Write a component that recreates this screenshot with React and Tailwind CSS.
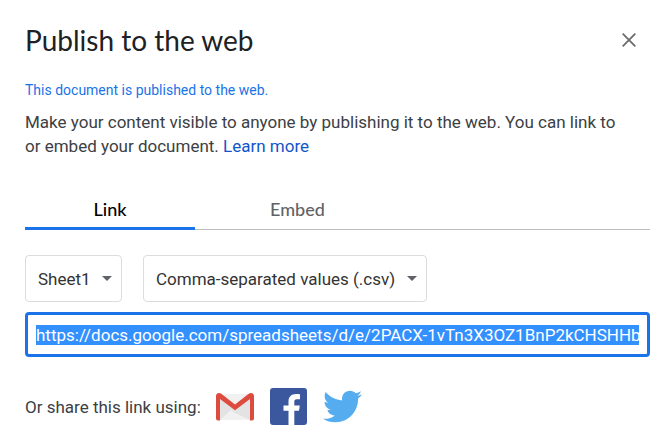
import { useEffect, useRef } from "react";
import { FaTwitter } from "react-icons/fa";

const PUBLISHED_URL =
  "https://docs.google.com/spreadsheets/d/e/2PACX-1vTn3X3OZ1BnP2kCHSHHb7/pub?gid=0&single=true&output=csv";

function Dropdown({ label, value }) {
  return (
    <div className="relative">
      <select
        aria-label={label}
        defaultValue={value}
        className="block h-[47px] appearance-none rounded border border-[#dadce0] bg-white pr-[30px] pl-3 text-[#333333]"
      >
        <option>{value}</option>
      </select>
      <svg
        viewBox="0 0 10 5"
        className="pointer-events-none absolute top-[21px] right-[10px] h-[5px] w-[10px] fill-[#5f6368]"
        aria-hidden="true"
      >
        <path d="M0 0h10L5 5z" />
      </svg>
    </div>
  );
}

function GmailIcon() {
  return (
    <svg viewBox="0 0 38 28" className="h-7 w-[38px]" aria-hidden="true">
      <rect x="1" y="1" width="36" height="26" rx="2" fill="#e3e3e3" />
      <path d="M4 27 15 17l4 3 15 7z" fill="#f1f1f1" />
      <path d="M3 1h32L19 13z" fill="#f1f1f1" />
      <path
        d="M0 3C0 .5 3-1 5.300.8L19 11.500 32.700.8C35-1 38 .5 38 3v22.500a2 2 0 0 1-2 2h-2V6L19 17.300 4 6v21.500H2a2 2 0 0 1-2-2z"
        fill="#dc4b3e"
      />
    </svg>
  );
}

function FacebookIcon() {
  return (
    <svg viewBox="0 0 37 37" className="size-[37px]" aria-hidden="true">
      <rect width="37" height="37" rx="3" fill="#3b579d" />
      <path
        d="M18.500 37V22.800h-5v-5.300h5v-4C18.500 8.700 21.500 6 26 6c2 0 3.500.2 4 .3v5h-3c-2.200 0-2.700 1-2.700 2.700v3.500h5.500l-.8 5.300h-4.700V37z"
        fill="#fff"
      />
    </svg>
  );
}

export default function App() {
  const linkRef = useRef(null);

  useEffect(() => {
    const input = linkRef.current;
    input.focus();
    // A backward selection keeps the start of the address in view.
    input.setSelectionRange(0, input.value.length, "backward");
    input.scrollLeft = 0;
  }, []);

  return (
    <main className="bg-white pt-[19px] pr-[22px] pb-3 pl-[25px] font-['Roboto',sans-serif] text-[17px] leading-6 text-[#3c4043]">
      <header className="flex items-center justify-between">
        <h1 className="font-['Lato','Roboto',sans-serif] text-[28px] leading-10 text-[#202124]">
          Publish to the web
        </h1>
        <button type="button" aria-label="Close" className="p-[14px]">
          <svg viewBox="0 0 14 14" className="size-[14px]" aria-hidden="true">
            <path d="M.7.7l12.600 12.600M13.300.7L.7 13.300" stroke="#6c6c6c" strokeWidth="1.800" fill="none" />
          </svg>
        </button>
      </header>

      <p className="mt-[19px] text-sm leading-5 text-[#1a73e8]">This document is published to the web.</p>
      <p className="mt-[10px] pr-5">
        Make your content visible to anyone by publishing it to the web. You can link to or embed your document.{" "}
        <a href="#learn-more" className="text-[#1155cc]">
          Learn more
        </a>
      </p>

      <div
        role="tablist"
        className="mt-[31px] flex border-b border-[#bdbdbd] font-['Lato','Roboto',sans-serif] text-lg leading-6"
      >
        <button
          type="button"
          role="tab"
          aria-selected="true"
          className="-mb-px w-[170px] border-b-3 border-[#1a73e8] pt-2 pb-[6px] font-medium text-black"
        >
          Link
        </button>
        <button
          type="button"
          role="tab"
          aria-selected="false"
          className="-mb-px border-b-3 border-transparent px-[75px] pt-2 pb-[6px] font-medium text-[#5f6368]"
        >
          Embed
        </button>
      </div>

      <div className="mt-[25px] flex gap-[21px]">
        <Dropdown label="Sheet" value="Sheet1" />
        <Dropdown label="Format" value="Comma-separated values (.csv)" />
      </div>

      <input
        ref={linkRef}
        type="text"
        readOnly
        aria-label="Published link"
        value={PUBLISHED_URL}
        className="mt-[10px] block h-[45px] w-full rounded border-3 border-[#1a73e8] px-2 outline-none selection:bg-[#3390ff] selection:text-white"
      />

      <div className="mt-[30px] flex items-center">
        <p className="mr-[15px]">Or share this link using:</p>
        <div className="flex items-center gap-4">
          <a href="#gmail" aria-label="Share with Gmail">
            <GmailIcon />
          </a>
          <a href="#facebook" aria-label="Share on Facebook">
            <FacebookIcon />
          </a>
          <a href="#twitter" aria-label="Share on Twitter">
            <FaTwitter className="size-[39px] text-[#55acee]" />
          </a>
        </div>
      </div>
    </main>
  );
}
